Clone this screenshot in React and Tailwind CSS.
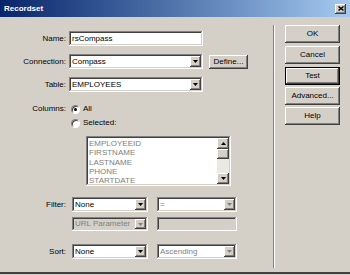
import React from 'react';

const raised = 'shadow-[inset_-1px_-1px_#404040,inset_1px_1px_#ffffff,inset_-2px_-2px_#808080,inset_2px_2px_#d4d0c8]';
const sunken = 'shadow-[inset_-1px_-1px_#ffffff,inset_1px_1px_#808080,inset_-2px_-2px_#d4d0c8,inset_2px_2px_#404040]';

function Arrow({ up = false, disabled = false }) {
  return (
    <svg width="5" height="3" viewBox="0 0 5 3" className={up ? 'rotate-180' : ''}>
      <polygon points="0,0 5,0 2.5,3" fill={disabled ? '#808080' : '#000000'} />
    </svg>
  );
}

function Select({ value, width, disabled = false, white = true, h = 'h-[15px]' }) {
  return (
    <div className={`${width} ${h} ${sunken} ${white ? 'bg-white' : 'bg-[#d4d0c8]'} flex items-stretch p-[2px]`}>
      <div className={`flex-1 flex items-center pl-[1px] truncate ${disabled ? 'text-[#808080]' : 'text-black'}`}>{value}</div>
      <div className={`w-[11px] bg-[#d4d0c8] ${raised} flex items-center justify-center`}>
        <Arrow disabled={disabled} />
      </div>
    </div>
  );
}

function Button({ children, focused = false }) {
  return (
    <div
      className={`w-[55px] h-[18px] bg-[#d4d0c8] flex items-center justify-center ${
        focused ? 'border border-black shadow-[inset_-1px_-1px_#404040,inset_1px_1px_#ffffff,inset_-2px_-2px_#808080]' : raised
      }`}
    >
      {children}
    </div>
  );
}

function Radio({ checked }) {
  return (
    <div className="w-[9px] h-[9px] rounded-full bg-white border border-t-[#808080] border-l-[#808080] border-b-white border-r-white shadow-[inset_1px_1px_#404040] flex items-center justify-center">
      {checked && <div className="w-[3px] h-[3px] rounded-full bg-black" />}
    </div>
  );
}

export default function App() {
  const columns = ['EMPLOYEEID', 'FIRSTNAME', 'LASTNAME', 'PHONE', 'STARTDATE'];

  return (
    <div className="w-[350px] h-[275px] bg-[#d4d0c8] font-['Liberation_Sans',Arial,sans-serif] text-[8px] leading-none text-black overflow-hidden">
      <div className="w-[350px] h-[274px] flex flex-col border-b-2 border-b-[#404040]">
        {/* title bar */}
        <div className="h-[17px] flex items-center pl-[4px] pr-[4px] bg-linear-to-r from-[#0a246a] to-[#a6caf0]">
          <span className="text-white font-bold">Recordset</span>
          <div className={`ml-auto w-[11px] h-[10px] bg-[#d4d0c8] ${raised} flex items-center justify-center`}>
            <svg width="6" height="5" viewBox="0 0 6 5">
              <path d="M0.5 0.5 L5.5 4.5 M5.5 0.5 L0.5 4.5" stroke="#000" strokeWidth="1.4" />
            </svg>
          </div>
        </div>

        <div className="flex flex-1">
          {/* left pane */}
          <div className="w-[273px] pt-[14px] flex flex-col">
            <div className="flex items-center h-[15px]">
              <div className="w-[66px] text-right">Name:</div>
              <div className={`ml-[3px] w-[134px] h-[15px] bg-white ${sunken} flex items-center pl-[3px]`}>rsCompass</div>
            </div>

            <div className="flex items-center h-[15px] mt-[8px]">
              <div className="w-[66px] text-right">Connection:</div>
              <div className="ml-[3px]">
                <Select value="Compass" width="w-[134px]" />
              </div>
              <div className={`ml-[6px] w-[39px] h-[14px] bg-[#d4d0c8] ${raised} flex items-center justify-center`}>Define...</div>
            </div>

            <div className="flex items-center h-[15px] mt-[8px]">
              <div className="w-[66px] text-right">Table:</div>
              <div className="ml-[3px]">
                <Select value="EMPLOYEES" width="w-[134px]" />
              </div>
            </div>

            <div className="flex items-center h-[12px] mt-[11px]">
              <div className="w-[66px] text-right">Columns:</div>
              <div className="ml-[5px]">
                <Radio checked />
              </div>
              <span className="ml-[3px]">All</span>
            </div>
            <div className="flex items-center h-[12px] mt-[2px]">
              <div className="ml-[71px]">
                <Radio />
              </div>
              <span className="ml-[3px]">Selected:</span>
            </div>

            <div className={`ml-[86px] mt-[7px] w-[145px] h-[50px] bg-white ${sunken} p-[2px] flex`}>
              <div className="flex-1 pl-[1px] pt-[1px] text-[#808080] leading-[9.25px]">
                {columns.map((c) => (
                  <div key={c}>{c}</div>
                ))}
              </div>
              <div className="w-[12px] flex flex-col bg-[#ebe9e4]">
                <div className={`h-[11px] bg-[#d4d0c8] ${raised} flex items-center justify-center`}>
                  <Arrow up />
                </div>
                <div className={`h-[10px] bg-[#d4d0c8] ${raised}`} />
                <div className="flex-1" />
                <div className={`h-[11px] bg-[#d4d0c8] ${raised} flex items-center justify-center`}>
                  <Arrow />
                </div>
              </div>
            </div>

            <div className="flex items-center h-[15px] mt-[11px]">
              <div className="w-[66px] text-right">Filter:</div>
              <div className="ml-[6px]">
                <Select value="None" width="w-[76px]" />
              </div>
              <div className="ml-[9px]">
                <Select value="=" width="w-[80px]" disabled />
              </div>
            </div>

            <div className="flex items-center h-[14px] mt-[5px]">
              <div className="ml-[72px]">
                <Select value="URL Parameter" width="w-[76px]" disabled white={false} h="h-[14px]" />
              </div>
              <div className={`ml-[9px] w-[80px] h-[14px] bg-[#d4d0c8] ${sunken}`} />
            </div>

            <div className="flex items-center h-[15px] mt-[13px]">
              <div className="w-[66px] text-right">Sort:</div>
              <div className="ml-[6px]">
                <Select value="None" width="w-[76px]" />
              </div>
              <div className="ml-[9px]">
                <Select value="Ascending" width="w-[80px]" disabled />
              </div>
            </div>
          </div>

          {/* separator */}
          <div className="w-[2px] mt-[8px] mb-[4px] border-l border-l-[#808080] border-r border-r-white" />

          {/* buttons */}
          <div className="pl-[10px] pt-[8px] flex flex-col">
            <Button>OK</Button>
            <div className="mt-[3px]">
              <Button>Cancel</Button>
            </div>
            <div className="mt-[3px]">
              <Button focused>Test</Button>
            </div>
            <div className="mt-[2px]">
              <Button>Advanced...</Button>
            </div>
            <div className="mt-[2px]">
              <Button>Help</Button>
            </div>
          </div>
        </div>
      </div>
    </div>
  );
}
